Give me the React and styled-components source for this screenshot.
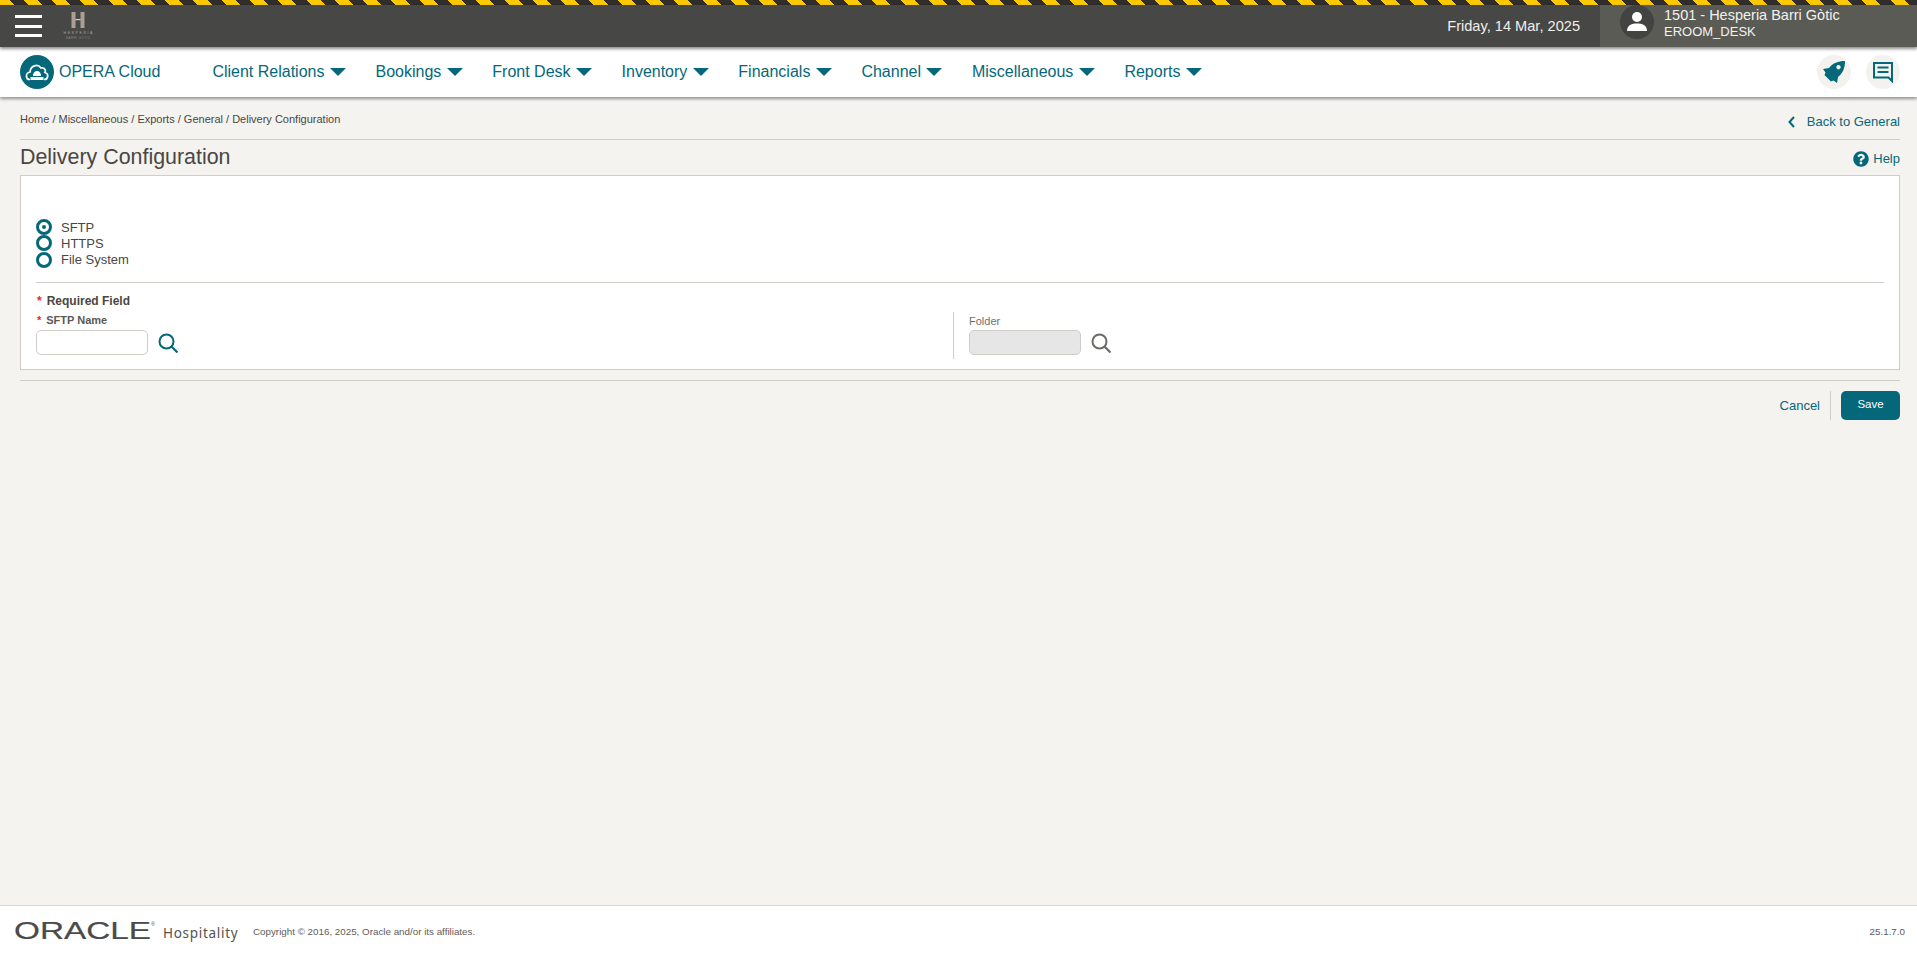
import React from "react";
import styled, { createGlobalStyle } from "styled-components";
import { FaQuestionCircle } from "react-icons/fa";

const teal = "#04687a";
const line = "#cfcdc8";

const GlobalStyle = createGlobalStyle`
  html, body {
    margin: 0;
    padding: 0;
    background: #f4f3ef;
    font-family: "Liberation Sans", Arial, sans-serif;
  }
  * {
    box-sizing: border-box;
  }
`;

const Page = styled.div`
  display: flex;
  flex-direction: column;
  height: 954px;
  overflow: hidden;
`;

const Stripes = styled.div`
  height: 5px;
  flex: none;
  background: repeating-linear-gradient(45deg, #fcc800 0 10px, #312d2a 10px 20px);
`;

const TopBar = styled.div`
  display: flex;
  align-items: stretch;
  height: 42px;
  flex: none;
  background: #474745;
  box-shadow: 0 2px 3px rgba(0, 0, 0, 0.45);
  position: relative;
  z-index: 3;
`;

const Burger = styled.div`
  width: 27px;
  height: 22px;
  margin: 10px 0 0 15px;
  display: flex;
  flex-direction: column;
  justify-content: space-between;
  span {
    display: block;
    height: 3px;
    background: #fff;
  }
`;

const BrandMark = styled.svg`
  width: 32px;
  height: 32px;
  margin: 3px 0 0 20px;
`;

const DateText = styled.div`
  margin-left: auto;
  margin-right: 20px;
  color: #f0efec;
  font-size: 14.6px;
  line-height: 42px;
  white-space: nowrap;
`;

const PropertyBox = styled.div`
  width: 317px;
  background: #5a5b55;
  display: flex;
  padding-left: 20px;
  gap: 10px;
`;

const Avatar = styled.div`
  width: 34px;
  height: 34px;
  border-radius: 50%;
  background: #434341;
  display: flex;
  align-items: center;
  justify-content: center;
`;

const PropertyText = styled.div`
  color: #f3f2ee;
  padding-top: 2px;
  div:first-child {
    font-size: 14.5px;
    line-height: 17px;
  }
  div:last-child {
    font-size: 13px;
    line-height: 15px;
  }
`;

const NavBar = styled.div`
  display: flex;
  align-items: center;
  height: 50px;
  flex: none;
  padding: 0 17px 0 20px;
  background: #fff;
  box-shadow: 0 2px 3px rgba(0, 0, 0, 0.4);
  position: relative;
  z-index: 2;
`;

const LogoCircle = styled.div`
  width: 34px;
  height: 34px;
  border-radius: 50%;
  background: ${teal};
  display: flex;
  align-items: center;
  justify-content: center;
`;

const AppName = styled.div`
  font-size: 16px;
  color: ${teal};
  margin: 0 52px 0 5px;
`;

const NavItem = styled.div`
  display: flex;
  align-items: center;
  gap: 5.5px;
  font-size: 16px;
  color: ${teal};
  margin-right: 29.5px;
  white-space: nowrap;
  &::after {
    content: "";
    border-left: 8px solid transparent;
    border-right: 8px solid transparent;
    border-top: 8px solid ${teal};
  }
`;

const NavIcons = styled.div`
  margin-left: auto;
  display: flex;
  gap: 15px;
`;

const RoundIcon = styled.div`
  width: 34px;
  height: 34px;
  border-radius: 50%;
  background: #f3f2ee;
  display: flex;
  align-items: center;
  justify-content: center;
`;

const Content = styled.div`
  flex: 1;
  padding: 0 17px 0 20px;
`;

const CrumbRow = styled.div`
  display: flex;
  justify-content: space-between;
  height: 43px;
  border-bottom: 1px solid ${line};
  padding-top: 15px;
`;

const Crumbs = styled.div`
  font-size: 11px;
  line-height: 14px;
  color: #4a4642;
`;

const BackLink = styled.div`
  display: flex;
  align-items: center;
  align-self: flex-start;
  gap: 12px;
  font-size: 13px;
  line-height: 15px;
  margin-top: 2px;
  color: ${teal};
`;

const TitleRow = styled.div`
  display: flex;
  justify-content: space-between;
  align-items: center;
  height: 35px;
  padding-bottom: 1px;
`;

const Title = styled.h1`
  margin: 0;
  font-size: 21.4px;
  font-weight: 400;
  color: #4a4642;
`;

const HelpLink = styled.div`
  display: flex;
  align-items: center;
  gap: 4px;
  font-size: 13px;
  color: ${teal};
  margin-top: 3px;
`;

const Panel = styled.div`
  height: 195px;
  background: #fff;
  border: 1px solid ${line};
  padding: 43px 15px 0;
`;

const RadioRow = styled.div`
  display: flex;
  align-items: center;
  gap: 9px;
  height: ${(p) => p.$h}px;
  font-size: 13px;
  color: #4a4642;
`;

const RadioDot = styled.span`
  width: 16px;
  height: 16px;
  border-radius: 50%;
  border: 3px solid ${teal};
  display: flex;
  align-items: center;
  justify-content: center;
  background: #fff;
  &::after {
    content: "";
    width: 4px;
    height: 4px;
    border-radius: 50%;
    background: ${(p) => (p.$on ? teal : "transparent")};
  }
`;

const Divider = styled.div`
  height: 1px;
  background: ${line};
  margin-top: 14px;
`;

const RequiredNote = styled.div`
  font-size: 12px;
  font-weight: 700;
  color: #4a4642;
  line-height: 14px;
  margin-top: 11px;
  padding-left: 1px;
`;

const Star = styled.span`
  color: #e8262c;
  margin-right: 5px;
`;

const Fields = styled.div`
  display: flex;
  margin-top: 4px;
`;

const FieldCol = styled.div`
  width: 917px;
  height: 47px;
  padding-top: 2px;
`;

const SplitCol = styled(FieldCol)`
  flex: 1;
  border-left: 1px solid ${line};
  padding-left: 15px;
`;

const FieldLabel = styled.div`
  font-size: 11px;
  line-height: 13px;
  color: #5c5955;
  font-weight: 700;
  padding-left: 1px;
`;

const MutedLabel = styled.div`
  font-size: 11px;
  line-height: 13px;
  color: #6f6f6c;
  padding-top: 1px;
  margin-bottom: -1px;
`;

const FieldRow = styled.div`
  display: flex;
  align-items: center;
  gap: 10px;
  margin-top: 3px;
`;

const TextInput = styled.div`
  width: 112px;
  height: 25px;
  border-radius: 5px;
  border: 1px solid ${line};
  background: ${(p) => (p.$disabled ? "#e6e6e6" : "#fff")};
`;

const ActionRow = styled.div`
  display: flex;
  justify-content: flex-end;
  align-items: center;
  margin-top: 10px;
  padding-top: 10px;
  border-top: 1px solid ${line};
`;

const CancelLink = styled.div`
  font-size: 13px;
  color: ${teal};
  padding-right: 10px;
  height: 29px;
  line-height: 29px;
  border-right: 1px solid ${line};
  margin-right: 10px;
`;

const SaveButton = styled.div`
  width: 59px;
  height: 29px;
  border-radius: 5px;
  background: ${teal};
  color: #fff;
  font-size: 11.5px;
  line-height: 26px;
  text-align: center;
`;

const Footer = styled.div`
  display: flex;
  align-items: center;
  height: 49px;
  flex: none;
  background: #fff;
  border-top: 1px solid #d8d7d3;
  padding: 0 12px 0 15px;
`;

const OracleLogo = styled.svg`
  width: 225px;
  height: 30px;
`;

const Copyright = styled.div`
  font-size: 9.8px;
  color: #5f5c58;
  margin: 2px 0 0 13px;
`;

const Version = styled.div`
  margin: 2px 0 0 auto;
  font-size: 9.8px;
  color: #5f5c58;
`;

const SearchIcon = ({ color }) => (
  <svg width="20" height="20" viewBox="0 0 20 20" fill="none" stroke={color} strokeWidth="2">
    <circle cx="8.5" cy="8.5" r="7" />
    <path d="M13.5 13.5 L19.5 19.5" strokeWidth="2.2" />
  </svg>
);

const menus = ["Client Relations", "Bookings", "Front Desk", "Inventory", "Financials", "Channel", "Miscellaneous", "Reports"];

export default function App() {
  return (
    <Page>
      <GlobalStyle />
      <Stripes />
      <TopBar>
        <Burger>
          <span />
          <span />
          <span />
        </Burger>
        <BrandMark viewBox="0 0 32 32">
          <rect x="9.5" y="4" width="4" height="16" fill="#a99f96" />
          <rect x="18.5" y="4" width="4" height="16" fill="#a99f96" />
          <rect x="13.5" y="11" width="5" height="1.2" fill="#d8d2cc" />
          <text x="16" y="25.5" fontSize="3.6" textLength="29" textAnchor="middle" fill="#a9a39c" fontFamily="Liberation Sans">HESPERIA</text>
          <text x="16" y="30.5" fontSize="2.8" textLength="24" textAnchor="middle" fill="#8d8780" fontFamily="Liberation Sans">BARRI GÒTIC</text>
        </BrandMark>
        <DateText>Friday, 14 Mar, 2025</DateText>
        <PropertyBox>
          <Avatar>
            <svg width="20" height="22" viewBox="0 0 20 22" fill="#fff">
              <circle cx="10" cy="6" r="5" />
              <path d="M0 20 C0 14 5 12.5 10 12.5 C15 12.5 20 14 20 20 Z" />
            </svg>
          </Avatar>
          <PropertyText>
            <div>1501 - Hesperia Barri Gòtic</div>
            <div>EROOM_DESK</div>
          </PropertyText>
        </PropertyBox>
      </TopBar>

      <NavBar>
        <LogoCircle>
          <svg width="24" height="18" viewBox="0 0 24 18" fill="none">
            <path d="M5 16.5 C0.5 16.5 0 10 5 9 C5.5 3 12.5 0 16 5 C20 4.5 21 7.5 20 9.5 C24 10.5 23.5 16.5 19 16.5" stroke="#fff" strokeWidth="1.7" />
            <path d="M8 13 C8 9.5 10 8 12 8 C14 8 16 9.5 16 13 Z" fill="#fff" />
            <rect x="5.5" y="14" width="13" height="3" fill="#fff" />
          </svg>
        </LogoCircle>
        <AppName>OPERA Cloud</AppName>
        {menus.map((m) => (
          <NavItem key={m}>{m}</NavItem>
        ))}
        <NavIcons>
          <RoundIcon>
            <svg width="24" height="24" viewBox="0 0 24 24" fill={teal}>
              <path
                fillRule="evenodd"
                d="M23 1 C23 8 21 13 16 17 L15 23 L11.5 20.5 L9 21.5 L2.5 15 L3.5 12.5 L1 9 L7 8 C11 3 16 1 23 1 Z M16.5 5 a2.2 2.2 0 1 0 0.01 0 Z"
              />
            </svg>
          </RoundIcon>
          <RoundIcon>
            <svg width="20" height="22" viewBox="0 0 20 22" fill="none" stroke={teal} strokeWidth="2">
              <path d="M1 2 H19 V20 L15.5 16.5 H1 Z" />
              <path d="M4.5 6.5 H15.5 M4.5 11 H15.5" strokeWidth="2.2" />
            </svg>
          </RoundIcon>
        </NavIcons>
      </NavBar>

      <Content>
        <CrumbRow>
          <Crumbs>Home / Miscellaneous / Exports / General / Delivery Configuration</Crumbs>
          <BackLink>
            <svg width="7" height="12" viewBox="0 0 7 12" fill="none" stroke={teal} strokeWidth="2">
              <path d="M6 1 L1.5 6 L6 11" />
            </svg>
            Back to General
          </BackLink>
        </CrumbRow>
        <TitleRow>
          <Title>Delivery Configuration</Title>
          <HelpLink>
            <FaQuestionCircle size={16} color={teal} />
            Help
          </HelpLink>
        </TitleRow>
        <Panel>
          <RadioRow $h={16}>
            <RadioDot $on />
            SFTP
          </RadioRow>
          <RadioRow $h={16}>
            <RadioDot />
            HTTPS
          </RadioRow>
          <RadioRow $h={17}>
            <RadioDot />
            File System
          </RadioRow>
          <Divider />
          <RequiredNote>
            <Star>*</Star>Required Field
          </RequiredNote>
          <Fields>
            <FieldCol>
              <FieldLabel>
                <Star>*</Star>SFTP Name
              </FieldLabel>
              <FieldRow>
                <TextInput />
                <SearchIcon color={teal} />
              </FieldRow>
            </FieldCol>
            <SplitCol>
              <MutedLabel>Folder</MutedLabel>
              <FieldRow>
                <TextInput $disabled />
                <SearchIcon color="#6b6b68" />
              </FieldRow>
            </SplitCol>
          </Fields>
        </Panel>
        <ActionRow>
          <CancelLink>Cancel</CancelLink>
          <SaveButton>Save</SaveButton>
        </ActionRow>
      </Content>

      <Footer>
        <OracleLogo viewBox="0 0 225 30">
          <text x="-1" y="23.5" fontSize="23" textLength="137" lengthAdjust="spacingAndGlyphs" fill="#4a4a48" stroke="#4a4a48" strokeWidth="0.2" fontFamily="Liberation Sans">ORACLE</text>
          <text x="136" y="11" fontSize="5" fill="#4a4a48" fontFamily="Liberation Sans">®</text>
          <text x="148" y="23" fontSize="13.5" letterSpacing="0.7" fill="#55524e" fontFamily="Noto Sans">Hospitality</text>
        </OracleLogo>
        <Copyright>Copyright © 2016, 2025, Oracle and/or its affiliates.</Copyright>
        <Version>25.1.7.0</Version>
      </Footer>
    </Page>
  );
}
